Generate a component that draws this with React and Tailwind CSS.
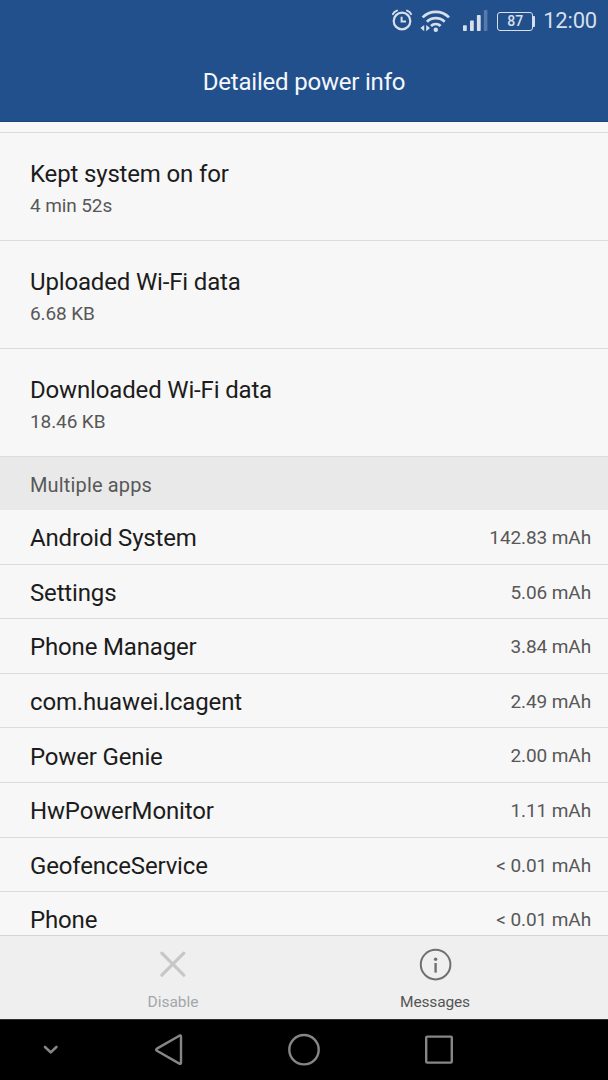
import React from 'react';

const details = [
  { label: 'Kept system on for', value: '4 min 52s' },
  { label: 'Uploaded Wi-Fi data', value: '6.68 KB' },
  { label: 'Downloaded Wi-Fi data', value: '18.46 KB' },
];

const apps = [
  { name: 'Android System', usage: '142.83 mAh' },
  { name: 'Settings', usage: '5.06 mAh' },
  { name: 'Phone Manager', usage: '3.84 mAh' },
  { name: 'com.huawei.lcagent', usage: '2.49 mAh' },
  { name: 'Power Genie', usage: '2.00 mAh' },
  { name: 'HwPowerMonitor', usage: '1.11 mAh' },
  { name: 'GeofenceService', usage: '< 0.01 mAh' },
  { name: 'Phone', usage: '< 0.01 mAh' },
];

const AlarmIcon = () => (
  <svg width="22" height="24" viewBox="0 0 22 24" fill="none" stroke="currentColor" strokeLinecap="round">
    <circle cx="11" cy="13" r="8.3" strokeWidth="2.2" />
    <path d="M10.6 8.8v4.8h4.4" strokeWidth="2" strokeLinecap="butt" />
    <path d="M1.9 6.2Q3 3.6 6 2.6M20.1 6.2Q19 3.6 16 2.6" strokeWidth="1.9" />
  </svg>
);

const WifiIcon = () => (
  <svg width="32" height="24" viewBox="0 0 32 24" fill="none" stroke="currentColor">
    <path d="M3.6 8.4a18.4 18.4 0 0 1 26.4 0" strokeWidth="2.7" />
    <path d="M7.9 12.8a12.6 12.6 0 0 1 17.8 0" strokeWidth="2.7" />
    <path d="M12 17a6.8 6.8 0 0 1 9.6 0" strokeWidth="2.7" />
    <circle cx="16.8" cy="20.8" r="2.2" fill="currentColor" stroke="none" />
    <path d="M5.2 16v6.2L1.4 19.1zM7.2 16v6.2l3.8-3.1z" fill="currentColor" stroke="none" />
  </svg>
);

const SignalIcon = () => (
  <svg width="26" height="24" viewBox="0 0 26 24" fill="currentColor">
    <rect x="1" y="17.2" width="3.8" height="5.8" rx="0.8" />
    <rect x="8" y="12.4" width="3.8" height="10.6" rx="0.8" />
    <rect x="14.9" y="7" width="3.8" height="16" rx="0.8" />
    <rect x="21.8" y="2" width="3.6" height="21" rx="0.8" opacity="0.3" />
  </svg>
);

const Battery = ({ level }) => (
  <div className="flex items-center">
    <div className="flex h-[19px] w-[36px] items-center justify-center rounded-[3px] border-[1.5px] border-[#d6dfea] text-[14px] font-medium leading-none">
      {level}
    </div>
    <div className="h-[11px] w-[2px] rounded-r-[1px] bg-[#d6dfea]" />
  </div>
);

const StatusBar = () => (
  <div className="flex h-[42px] items-center justify-end pr-[11px] text-[#d6dfea]">
    <div className="mr-[6px] -mt-[2px]"><AlarmIcon /></div>
    <div className="mr-[11px] -mt-[1px]"><WifiIcon /></div>
    <div className="mr-[9px] -mt-[2px]"><SignalIcon /></div>
    <div className="mr-[8px]"><Battery level={87} /></div>
    <span className="text-[22px] leading-[42px] tracking-[-0.2px]">12:00</span>
  </div>
);

const DetailRow = ({ label, value }) => (
  <div className="h-[108px] border-b border-[#dcdcdc] pl-[30px] pt-[25px]">
    <div className="text-[24px] leading-[32px] tracking-[-0.16px] text-[#1c1c1c]">{label}</div>
    <div className="text-[19px] leading-[31px] tracking-[-0.1px] text-[#585858]">{value}</div>
  </div>
);

const AppRow = ({ name, usage }) => (
  <div className="flex h-[54.6px] shrink-0 items-center justify-between border-b border-[#dcdcdc] pl-[30px] pr-[17px] pt-[3px]">
    <span className="text-[24px] tracking-[-0.16px] text-[#1c1c1c]">{name}</span>
    <span className="text-[19px] tracking-[-0.1px] text-[#585858]">{usage}</span>
  </div>
);

const BottomBar = () => (
  <div className="flex h-[84px] justify-center border-t border-[#d5d5d5] bg-[#efefef] text-[15.5px]">
    <div className="flex w-[262px] flex-col items-center text-[#a4a6aa]">
      <svg className="mt-[12px]" width="34" height="34" viewBox="0 0 34 34" fill="none" stroke="#c6c7c9" strokeWidth="3.2" strokeLinecap="round">
        <path d="M5.8 5.2l22 22M27.8 5.2l-22 22" />
      </svg>
      <span className="mt-[8px] leading-[24px]">Disable</span>
    </div>
    <div className="flex w-[262px] flex-col items-center text-[#555555]">
      <svg className="mt-[12px]" width="34" height="34" viewBox="0 0 34 34" fill="none" stroke="#707070">
        <circle cx="17.6" cy="16.6" r="14.8" strokeWidth="2" />
        <path d="M17.6 15v9.6" strokeWidth="2.4" />
        <circle cx="17.6" cy="11.2" r="1.7" fill="#707070" stroke="none" />
      </svg>
      <span className="mt-[8px] leading-[24px] tracking-[-0.15px]">Messages</span>
    </div>
  </div>
);

const NavBar = () => (
  <div className="flex h-[61px] items-center border-t border-[#303030] bg-black text-[#868686]">
    <svg className="ml-[42px]" width="18" height="12" viewBox="0 0 18 12" fill="none" stroke="currentColor" strokeWidth="2.6" strokeLinecap="round" strokeLinejoin="round">
      <path d="M3 3l5.7 5.4L14.4 3" />
    </svg>
    <svg className="ml-[92px]" width="34" height="34" viewBox="0 0 34 34" fill="none" stroke="currentColor" strokeWidth="2.4" strokeLinejoin="round">
      <path d="M4.9 15.6L27.4 2.7Q29 2 29 3.7v26Q29 31.4 27.4 30.6L4.9 17.8Q3.4 16.7 4.9 15.6z" />
    </svg>
    <svg className="ml-[101px]" width="34" height="34" viewBox="0 0 34 34" fill="none" stroke="currentColor" strokeWidth="2.4">
      <circle cx="17" cy="16.7" r="14.7" />
    </svg>
    <svg className="ml-[101px]" width="34" height="34" viewBox="0 0 34 34" fill="none" stroke="currentColor" strokeWidth="2.4">
      <rect x="4.2" y="3.6" width="25.6" height="26" rx="1" />
    </svg>
  </div>
);

const App = () => {
  return (
    <div className="flex h-[1080px] w-[608px] flex-col overflow-hidden bg-[#f7f7f7] font-['Roboto',sans-serif]">
      <header className="h-[122px] shrink-0 border-b border-[#1b447b] bg-[#21508d]">
        <StatusBar />
        <h1 className="text-center text-[24px] leading-[80px] tracking-[-0.2px] text-[#f4f7fa]">Detailed power info</h1>
      </header>

      <main className="flex min-h-0 flex-1 flex-col overflow-hidden">
        <div className="h-[11px] shrink-0 border-b border-[#dcdcdc]" />
        <section className="shrink-0">
          {details.map((item) => (
            <DetailRow key={item.label} {...item} />
          ))}
        </section>
        <h2 className="h-[53px] shrink-0 bg-[#e9e9e9] pl-[30px] text-[20px] leading-[56px] tracking-[0.15px] text-[#585858]">
          Multiple apps
        </h2>
        {apps.map((app) => (
          <AppRow key={app.name} {...app} />
        ))}
      </main>

      <footer className="shrink-0">
        <BottomBar />
        <NavBar />
      </footer>
    </div>
  );
};

export default App;
